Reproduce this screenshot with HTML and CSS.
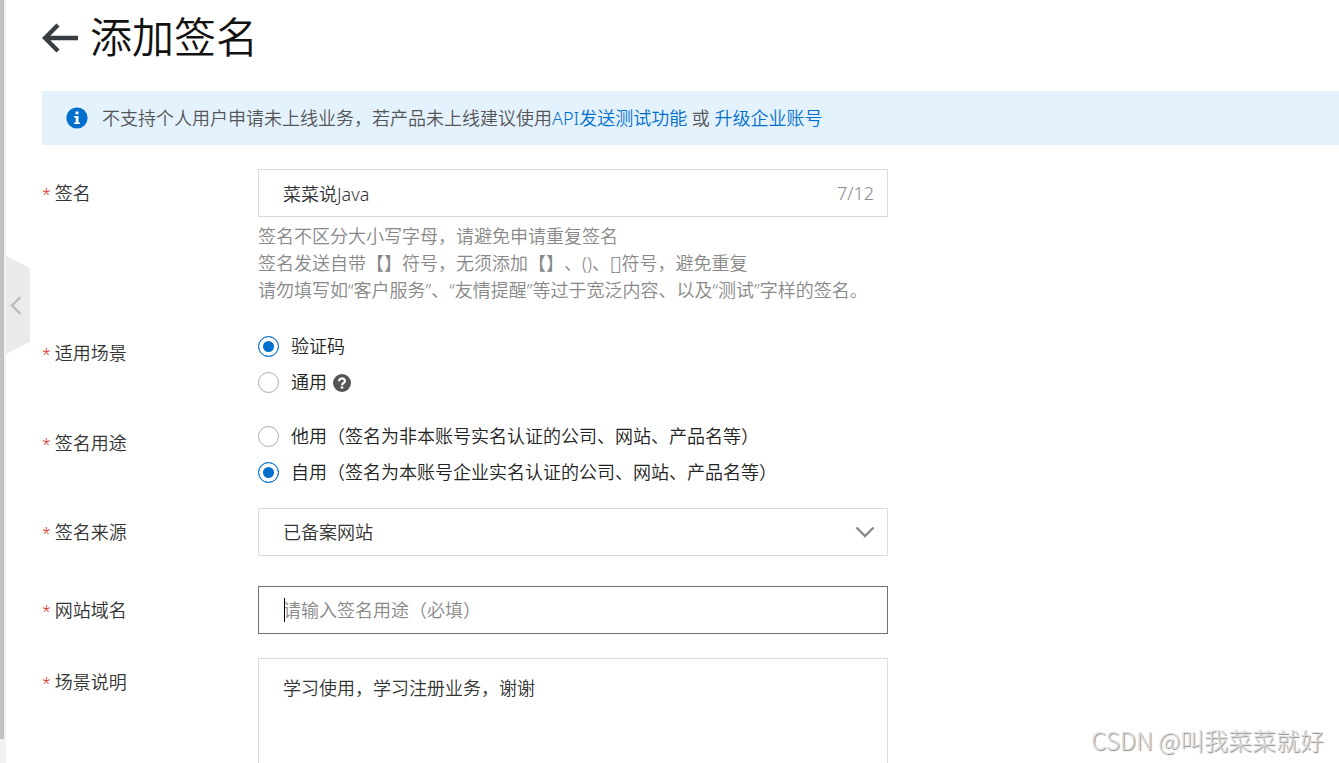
FILE: index.html
```html
<!DOCTYPE html>
<html lang="zh-CN">
<head>
<meta charset="utf-8">
<title>添加签名</title>
<link rel="stylesheet" href="styles.css">
</head>
<body>
<div class="shell">
  <div class="rail"><div class="rail-thumb"></div></div>
  <button class="collapse" type="button" aria-label="收起">
    <svg width="24" height="98" viewBox="0 0 24 98"><path d="M0 0L24 12V86L0 98Z" fill="#eaeaea"/><path d="M14.500 41L6 49.500L14.500 58" fill="none" stroke="#b9b9b9" stroke-width="2.200"/></svg>
  </button>
  <main class="main">
    <header class="header">
      <button class="back" type="button" aria-label="返回">
        <svg width="36" height="30" viewBox="0 0 36 30"><path d="M16 2L3 15L16 28M3 15H36" fill="none" stroke="#373d41" stroke-width="4.400"/></svg>
      </button>
      <h1 class="title">添加签名</h1>
    </header>
    <div class="notice">
      <svg class="notice-icon" width="22" height="22" viewBox="0 0 22 22"><circle cx="11" cy="11" r="10.600" fill="#0070cc"/><path d="M9.500 4.500h3v2.800h-3zM8 9h4.500v6.500H14V17H8v-1.500h1.700v-5H8z" fill="#fff"/></svg>
      <p class="notice-text">不支持个人用户申请未上线业务，若产品未上线建议使用<a href="#">API发送测试功能</a> 或 <a href="#">升级企业账号</a></p>
    </div>
    <form class="form">
      <div class="row">
        <label class="label" for="sign">签名</label>
        <div class="field">
          <div class="box">
            <input class="input" id="sign" type="text" value="菜菜说Java">
            <span class="count">7/12</span>
          </div>
          <p class="help">签名不区分大小写字母，请避免申请重复签名<br>签名发送自带【】符号，无须添加【】、()、[]符号，避免重复<br>请勿填写如“客户服务”、“友情提醒”等过于宽泛内容、以及“测试”字样的签名。</p>
        </div>
      </div>
      <div class="row row-scene" role="radiogroup" aria-labelledby="scene">
        <span class="label label-radio" id="scene">适用场景</span>
        <div class="field">
          <label class="option"><input class="radio" type="radio" name="scene" checked>验证码</label>
          <label class="option"><input class="radio" type="radio" name="scene">通用
            <svg class="tip" width="18" height="18" viewBox="0 0 18 18"><circle cx="9" cy="9" r="9" fill="#555"/><path d="M6 7.200C6 3.600 12 3.600 12 7C12 9 9 9 9 11.200" fill="none" stroke="#fff" stroke-width="2.200"/><path d="M7.800 12.400h2.400v2.200H7.800z" fill="#fff"/></svg>
          </label>
        </div>
      </div>
      <div class="row row-usage" role="radiogroup" aria-labelledby="usage">
        <span class="label label-radio" id="usage">签名用途</span>
        <div class="field">
          <label class="option"><input class="radio" type="radio" name="usage">他用（签名为非本账号实名认证的公司、网站、产品名等）</label>
          <label class="option"><input class="radio" type="radio" name="usage" checked>自用（签名为本账号企业实名认证的公司、网站、产品名等）</label>
        </div>
      </div>
      <div class="row row-source">
        <label class="label" for="source">签名来源</label>
        <div class="field">
          <div class="box">
            <select class="input" id="source"><option>已备案网站</option></select>
            <svg class="arrow" width="20" height="12" viewBox="0 0 20 12"><path d="M1.500 1.500L10 10L18.500 1.500" fill="none" stroke="#888" stroke-width="2.400"/></svg>
          </div>
        </div>
      </div>
      <div class="row row-domain">
        <label class="label" for="domain">网站域名</label>
        <div class="field">
          <div class="box box-active">
            <input class="input" id="domain" type="text" placeholder="请输入签名用途（必填）">
            <span class="caret"></span>
          </div>
        </div>
      </div>
      <div class="row row-desc">
        <label class="label" for="desc">场景说明</label>
        <div class="field">
          <textarea class="area" id="desc">学习使用，学习注册业务，谢谢</textarea>
        </div>
      </div>
    </form>
  </main>
  <div class="watermark">CSDN @叫我菜菜就好</div>
</div>
</body>
</html>
```
FILE: styles.css
```css
* { box-sizing: border-box; }
body {
  margin: 0;
  background: #fff;
  color: #333;
  font: 350 18px/27px "Noto Sans", "Noto Sans CJK SC", sans-serif;
  text-spacing-trim: space-all;
}
button { padding: 0; border: 0; background: none; }
svg { display: block; }
.shell { position: relative; display: flex; height: 100vh; overflow: hidden; }
.rail { flex: none; width: 6px; padding-bottom: 24px; background: #f0f0f0; }
.rail-thumb { width: 4px; height: 100%; background: #c1c1c1; }
.collapse { position: absolute; left: 6px; top: 256px; }
.main { flex: 1; min-width: 0; padding-left: 36px; }
.header { display: flex; align-items: center; gap: 12px; height: 75px; }
.title { margin: 0; padding-bottom: 2px; color: #111; font-size: 42px; font-weight: 350; line-height: 60px; }
.notice {
  display: flex;
  align-items: center;
  gap: 14px;
  min-height: 54px;
  margin-top: 16px;
  padding: 0 24px;
  background: #e4f2fe;
  color: #555;
}
.notice-icon { flex: none; }
.notice-text { margin: 0; }
.notice a { color: #0070cc; text-decoration: none; }
.form { margin-top: 24px; }
.row { display: flex; }
.row-scene, .row-desc { margin-top: 24px; }
.row-usage, .row-source { margin-top: 18px; }
.row-domain { margin-top: 30px; }
.label { flex: none; width: 216px; line-height: 48px; }
.label-radio { line-height: 50px; }
.label::before { content: "*"; margin-right: 4px; color: #d93026; font-size: 16px; line-height: 1; }
.field { flex: 1; max-width: 630px; }
.box {
  position: relative;
  display: flex;
  align-items: center;
  height: 48px;
  border: 1px solid #dcdcdc;
}
.box-active { border-color: #707070; }
.input {
  flex: 1;
  min-width: 0;
  height: 100%;
  padding: 0 24px;
  border: 0;
  outline: 0;
  background: none;
  color: #333;
  font: inherit;
  appearance: none;
}
.input::placeholder { color: #888; opacity: 1; }
.count { padding-right: 13px; color: #888; }
.arrow { position: absolute; right: 12px; top: 17px; pointer-events: none; }
.caret { position: absolute; left: 25px; top: 11px; width: 1px; height: 24px; background: #000; }
.help { margin: 0; padding-top: 6px; color: #888; white-space: nowrap; }
.option {
  display: flex;
  align-items: center;
  height: 36px;
  color: #222;
  white-space: nowrap;
}
.radio {
  flex: none;
  width: 21px;
  height: 21px;
  margin: 0 12px 0 0;
  border: 1px solid #aaa;
  border-radius: 50%;
  background: #fff;
  appearance: none;
}
.radio:checked { border: 1px solid #0070cc; background: #0070cc; box-shadow: inset 0 0 0 4px #fff; }
.tip { margin: 2px 0 0 6px; }
.area {
  display: block;
  width: 100%;
  height: 144px;
  padding: 16px 24px;
  border: 1px solid #dcdcdc;
  outline: 0;
  resize: none;
  color: #333;
  font: inherit;
}
.watermark {
  position: absolute;
  right: 15px;
  bottom: 5px;
  color: #ddd;
  font: 300 24px/36px "Noto Sans CJK SC", sans-serif;
  text-shadow: 1px 1px 1px #888;
}
```
